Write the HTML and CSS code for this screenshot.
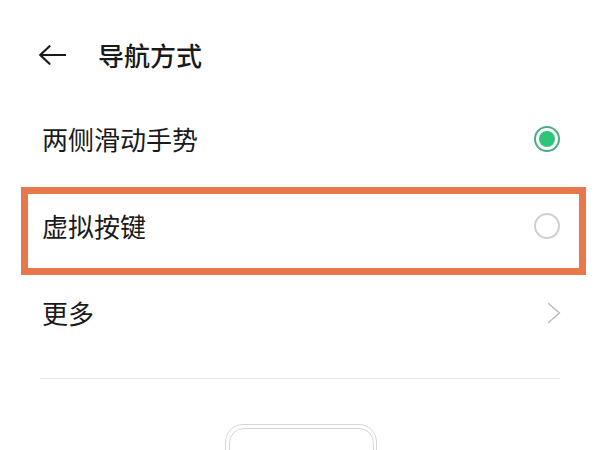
FILE: index.html
```html
<!DOCTYPE html>
<html lang="zh-CN">
<head>
<meta charset="utf-8">
<title>导航方式</title>
<link rel="stylesheet" href="styles.css">
</head>
<body>
<div class="page">
  <header class="header">
    <svg class="back" width="28" height="20" viewBox="0 0 28 20" aria-hidden="true">
      <path d="M27.5 10H2.5M11.5 1.2L2.2 10l9.3 8.8" fill="none" stroke="#1a1a1a" stroke-width="2.2" stroke-linecap="round" stroke-linejoin="round"/>
    </svg>
    <h1 class="title">导航方式</h1>
  </header>

  <ul class="list">
    <li class="row">
      <span class="label">两侧滑动手势</span>
      <span class="radio radio-on"><span class="dot"></span></span>
    </li>
    <li class="row row-marked">
      <span class="label">虚拟按键</span>
      <span class="radio"></span>
      <span class="mark"></span>
    </li>
    <li class="row">
      <span class="label">更多</span>
      <svg class="chev" width="14" height="22" viewBox="0 0 14 22" aria-hidden="true">
        <path d="M1.5 1.5L12.5 11L1.5 20.5" fill="none" stroke="#bdbdbd" stroke-width="1.6" stroke-linecap="round" stroke-linejoin="round"/>
      </svg>
    </li>
  </ul>
  <div class="divider"></div>

  <div class="preview">
    <div class="phone"><div class="phone-inner"></div></div>
  </div>
</div>
</body>
</html>
```

FILE: styles.css
```css
html, body {
  margin: 0;
  padding: 0;
  background: #ffffff;
}
body {
  height: 450px;
  overflow: hidden;
  font-family: "Noto Sans CJK SC", "Noto Sans", sans-serif;
  color: #1a1a1a;
}
.page {
  width: 600px;
}
.header {
  display: flex;
  align-items: center;
  height: 60px;
  margin-top: 25px;
  padding-left: 38px;
}
.back {
  display: block;
  margin-right: 32px;
}
.title {
  margin: 0;
  font-size: 26px;
  font-weight: 500;
  line-height: 1;
}
.list {
  list-style: none;
  margin: 10px 0 0;
  padding: 0 40px;
}
.row {
  position: relative;
  display: flex;
  align-items: center;
  justify-content: space-between;
  height: 87px;
  padding-left: 2px;
}
.label {
  font-size: 26px;
  line-height: 1;
}
.radio {
  box-sizing: border-box;
  width: 26px;
  height: 26px;
  border-radius: 50%;
  border: 2px solid #cfcfcf;
  display: flex;
  align-items: center;
  justify-content: center;
}
.radio-on {
  border-color: #4aae80;
}
.dot {
  width: 16px;
  height: 16px;
  border-radius: 50%;
  background: #2fc47a;
}
.chev {
  display: block;
  margin-right: -1px;
}
.mark {
  position: absolute;
  left: -19px;
  right: -26px;
  top: 5px;
  height: 88px;
  box-sizing: border-box;
  border: 7px solid #e8774b;
  pointer-events: none;
}
.divider {
  height: 1px;
  background: #e6e6e6;
  margin: 22px 40px 0;
}
.preview {
  display: flex;
  justify-content: center;
  margin-top: 45px;
  padding-left: 2px;
  height: 26px;
  overflow: hidden;
}
.phone {
  box-sizing: border-box;
  flex: none;
  width: 152px;
  height: 120px;
  border: 1.5px solid #d6d6d6;
  border-radius: 18px;
  padding: 2.5px;
}
.phone-inner {
  box-sizing: border-box;
  height: 100%;
  border: 1.5px solid #d6d6d6;
  border-radius: 15px;
}
```
